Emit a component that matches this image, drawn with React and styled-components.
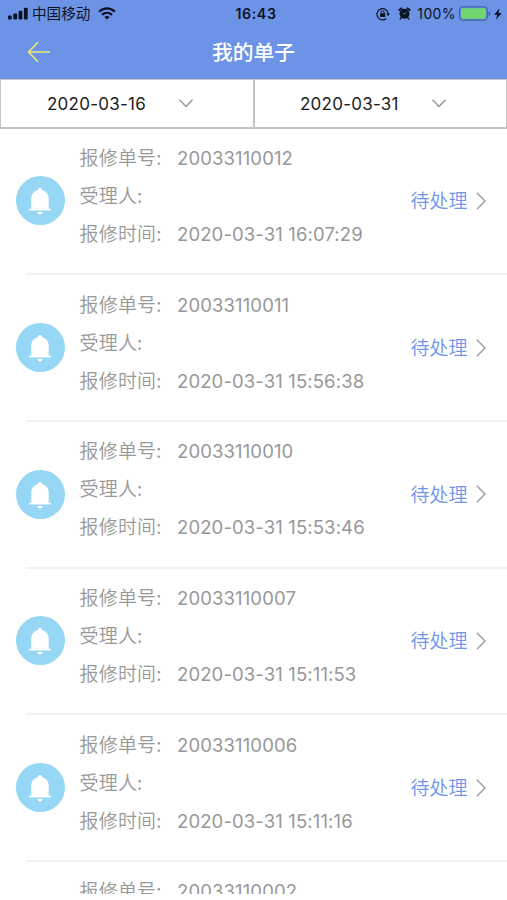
import React from "react";
import styled, { createGlobalStyle } from "styled-components";

const GlobalStyle = createGlobalStyle`
  * { box-sizing: border-box; }
  body { margin: 0; background: #fff; }
`;

const Screen = styled.main`
  height: 900px;
  display: flex;
  flex-direction: column;
  overflow: hidden;
  padding-bottom: 6px;
  background: #fff;
  font-family: Inter, "Noto Sans CJK SC", sans-serif;
`;

const Header = styled.header`
  flex: none;
  height: 79px;
  background: #6c93e6;
`;

const StatusBar = styled.div`
  height: 27px;
  display: grid;
  grid-template-columns: 1fr auto 1fr;
  align-items: center;
  padding: 0 5px 0 8px;
  color: #0b1322;
`;

const StatusGroup = styled.div`
  display: flex;
  align-items: center;
  justify-content: ${(p) => (p.$end ? "flex-end" : "flex-start")};
  svg { display: block; flex: none; }
`;

const Carrier = styled.span`
  font-size: 14.6px;
  line-height: 25px;
  padding-top: 2px;
  margin: 0 8px 0 4px;
`;

const Clock = styled.time`
  font-size: 14.2px;
  font-weight: 600;
  line-height: 27px;
  letter-spacing: 0.6px;
  padding-left: 2px;
`;

const Percent = styled.span`
  font-size: 14px;
  line-height: 27px;
  letter-spacing: 0.4px;
  margin: 0 3px 0 6px;
`;

const NavBar = styled.div`
  height: 52px;
  display: grid;
  grid-template-columns: 80px 1fr 80px;
  align-items: center;
`;

const BackButton = styled.button`
  border: 0;
  background: none;
  padding: 0 0 2px 27px;
  height: 52px;
  display: flex;
  align-items: center;
`;

const Title = styled.h1`
  margin: 0;
  padding-bottom: 3px;
  text-align: center;
  color: #fff;
  font-family: "Noto Sans CJK SC", sans-serif;
  font-size: 20.8px;
  font-weight: 500;
  line-height: 49px;
`;

const Filters = styled.section`
  flex: none;
  height: 49.5px;
  display: grid;
  grid-template-columns: 253px 254px;
`;

const DateFilter = styled.button`
  display: flex;
  align-items: center;
  background: #fff;
  border: solid #c4c4c4;
  border-width: ${(p) => (p.$first ? "1px 0 2px 1px" : "1px 1px 2px 2px")};
  padding: 1px 60px 0 ${(p) => (p.$first ? "46px" : "45px")};
  font-family: inherit;
  font-size: 17px;
  letter-spacing: 0.25px;
  color: #1c1c1c;
  svg { margin-left: auto; }
`;

const List = styled.ul`
  flex: 1;
  min-height: 0;
  overflow: hidden;
  list-style: none;
  margin: 0;
  padding: 0;
`;

const Ticket = styled.li`
  height: 146.7px;
  margin-left: 26px;
  border-bottom: 2px solid #f1f1f1;
  display: flex;
  align-items: center;
`;

const Badge = styled.span`
  flex: none;
  width: 49px;
  height: 49px;
  margin: 0 15px 0 -10.5px;
  padding-top: 2px;
  border-radius: 50%;
  background: #95d7f5;
  display: flex;
  align-items: center;
  justify-content: center;
`;

const Fields = styled.dl`
  flex: 1;
  margin: 0 0 10px;
  color: #989898;
  font-size: 19px;
`;

const Field = styled.div`
  display: flex;
  height: 38px;
  line-height: 38px;
  white-space: nowrap;
`;

const Label = styled.dt`
  width: 97.5px;
  font-family: "Noto Sans CJK SC", sans-serif;
  font-weight: 350;
  letter-spacing: 0.2px;
  line-height: 36px;
`;

const Value = styled.dd`
  margin: 0;
  font-size: 18.5px;
  letter-spacing: 0.12px;
`;

const Status = styled.button`
  border: 0;
  background: none;
  padding: 0;
  margin-right: 21px;
  display: flex;
  align-items: center;
  gap: 8.5px;
  color: #6f95e9;
  font-family: "Noto Sans CJK SC", sans-serif;
  font-weight: 350;
  font-size: 19px;
  line-height: 30px;
`;

const StatusText = styled.span`
  padding-bottom: 1px;
`;

const StatusGap = styled.span`
  width: ${(p) => p.$size}px;
`;

const tickets = [
  ["20033110012", "2020-03-31 16:07:29"],
  ["20033110011", "2020-03-31 15:56:38"],
  ["20033110010", "2020-03-31 15:53:46"],
  ["20033110007", "2020-03-31 15:11:53"],
  ["20033110006", "2020-03-31 15:11:16"],
  ["20033110002", ""],
];

const SignalIcon = () => (
  <svg width="20" height="13" viewBox="0 0 20 13" fill="currentColor">
    <rect x="0" y="8.5" width="3.8" height="4" rx="1" />
    <rect x="5.3" y="6.5" width="3.8" height="6" rx="1" />
    <rect x="10.6" y="3.8" width="3.8" height="8.7" rx="1" />
    <rect x="15.9" y="0.7" width="3.8" height="11.8" rx="1" />
  </svg>
);

const WifiIcon = () => (
  <svg width="18" height="13" viewBox="0 0 18 13" fill="none" stroke="currentColor" strokeWidth="2.2">
    <path d="M1.1 4.7C5.7.2 12.3.2 16.9 4.7" />
    <path d="M4 7.9c2.9-2.7 7.1-2.7 10 0" />
    <path d="M9 12.6 6.3 10c1.6-1.4 3.8-1.4 5.4 0z" fill="currentColor" stroke="none" />
  </svg>
);

const RotationLockIcon = () => (
  <svg width="14" height="14" viewBox="0 0 14 14" fill="none" stroke="currentColor" strokeWidth="1.2">
    <path d="M10.3 11.5A5.6 5.6 0 1 1 12.2 7" />
    <path d="M10.2 6.5h3.8L12.1 9z" fill="currentColor" stroke="none" />
    <rect x="4" y="6.3" width="5.2" height="3.7" rx=".5" fill="currentColor" stroke="none" />
    <path d="M5.1 6.5V5.3a1.5 1.5 0 0 1 3 0v1.2" strokeWidth="1" />
  </svg>
);

const AlarmIcon = () => (
  <svg width="13" height="13" viewBox="0 0 13 13" stroke="currentColor" strokeLinecap="round">
    <circle cx="6.5" cy="6.8" r="5" fill="currentColor" stroke="none" />
    <path d="M1.4 3 3.3 1.4M11.6 3 9.7 1.4" strokeWidth="2" />
    <path d="m3 11-.9 1.1M10 11l.9 1.1" strokeWidth="1.4" />
    <path d="M6.7 7 8.4 5.2M6.7 7 5.2 6.4" stroke="#6c93e6" strokeWidth=".6" />
  </svg>
);

const BatteryIcon = () => (
  <svg width="32" height="15" viewBox="0 0 32 15">
    <rect x="0.6" y="0.9" width="27.6" height="13.2" rx="3" fill="none" stroke="#38588f" strokeWidth="1" />
    <rect x="2" y="2.3" width="24.8" height="10.4" rx="1.6" fill="#70d66f" />
    <path d="M29.8 5.2c1.8.7 1.8 3.9 0 4.6z" fill="#38588f" />
  </svg>
);

const BoltIcon = () => (
  <svg width="8" height="12" viewBox="0 0 8 12" fill="currentColor">
    <path d="M5.4.3.3 6.7h2.9L2 11.7l5.6-6.8H4.5z" />
  </svg>
);

const BackIcon = () => (
  <svg width="23" height="22" viewBox="0 0 23 22" fill="none" stroke="#e9ed75" strokeWidth="1.6">
    <path d="M11 1.2 1.5 11l9.5 9.8M1.5 11H23" />
  </svg>
);

const ChevronDown = () => (
  <svg width="14" height="9" viewBox="0 0 14 9" fill="none" stroke="#929292" strokeWidth="1.3">
    <path d="m.5.8 6.5 6.7L13.5.8" />
  </svg>
);

const ChevronRight = () => (
  <svg width="10" height="18" viewBox="0 0 10 18" fill="none" stroke="#a0a0a0" strokeWidth="1.5">
    <path d="m.8.8 8.2 8.2-8.2 8.2" />
  </svg>
);

const BellIcon = () => (
  <svg width="22" height="27" viewBox="0 0 22 27" fill="#fff">
    <path d="M9 1.9a2 2 0 0 1 4 0c4 1 6.700 4.300 6.700 8.500V20c0 .5.2.8.7.8h.7a.9.9 0 0 1 0 1.800H.9a.9.9 0 0 1 0-1.800h.7c.5 0 .7-.3.7-.8v-9.600C2.300 6.200 5 2.900 9 1.900z" />
    <path d="M8.200 24.100h5.600c-.3 1.500-1.300 2.400-2.800 2.400s-2.500-.9-2.800-2.400z" />
  </svg>
);

const TicketRow = ({ number, time }) => (
  <Ticket>
    <Badge><BellIcon /></Badge>
    <Fields>
      <Field><Label>报修单号:</Label><Value>{number}</Value></Field>
      <Field><Label>受理人:</Label></Field>
      <Field><Label>报修时间:</Label><Value>{time}</Value></Field>
    </Fields>
    <Status><StatusText>待处理</StatusText><ChevronRight /></Status>
  </Ticket>
);

export default function App() {
  return (
    <Screen>
      <GlobalStyle />
      <Header>
        <StatusBar>
          <StatusGroup>
            <SignalIcon />
            <Carrier>中国移动</Carrier>
            <WifiIcon />
          </StatusGroup>
          <Clock>16:43</Clock>
          <StatusGroup $end>
            <RotationLockIcon />
            <StatusGap $size={8} />
            <AlarmIcon />
            <Percent>100%</Percent>
            <BatteryIcon />
            <StatusGap $size={3} />
            <BoltIcon />
          </StatusGroup>
        </StatusBar>
        <NavBar>
          <BackButton aria-label="返回"><BackIcon /></BackButton>
          <Title>我的单子</Title>
        </NavBar>
      </Header>
      <Filters>
        <DateFilter $first>2020-03-16<ChevronDown /></DateFilter>
        <DateFilter>2020-03-31<ChevronDown /></DateFilter>
      </Filters>
      <List>
        {tickets.map(([number, time]) => (
          <TicketRow key={number} number={number} time={time} />
        ))}
      </List>
    </Screen>
  );
}
